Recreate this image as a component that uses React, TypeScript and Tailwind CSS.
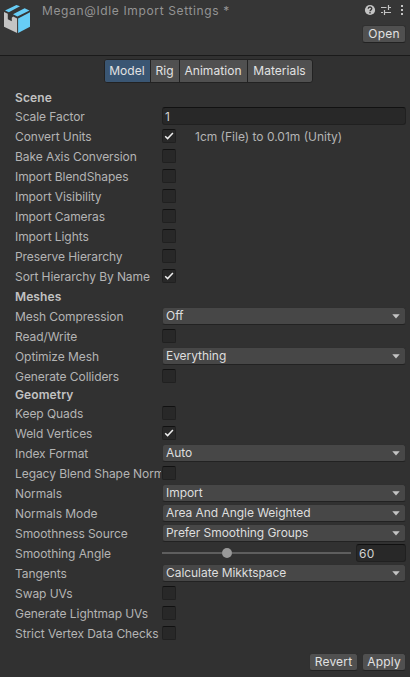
import type { ReactNode } from "react";

function Label({ children }: { children: ReactNode }) {
  return (
    <div className="mr-px w-[146px] shrink-0 overflow-hidden whitespace-nowrap pt-[2px] leading-[18px] tracking-[-0.07px] text-[#b4b4b4]">
      {children}
    </div>
  );
}

function Row({ label, children }: { label: string; children: ReactNode }) {
  return (
    <div className="flex h-5 items-center">
      <Label>{label}</Label>
      {children}
    </div>
  );
}

function Check({ label, on, note }: { label: string; on?: boolean; note?: string }) {
  return (
    <Row label={label}>
      <div className="h-[14px] w-[14px] shrink-0 rounded-[2px] border border-[#202020] border-t-[#111111] bg-[#282828]">
        {on && (
          <svg width="12" height="12" viewBox="0 0 12 12" fill="none" className="block">
            <path d="M2.2 6.3 4.6 8.6 9.9 3.1" stroke="#eeeeee" strokeWidth="1.5" />
          </svg>
        )}
      </div>
      {note && <span className="ml-[19px] whitespace-nowrap pt-px leading-[18px] tracking-[0px] text-[#b4b4b4]">{note}</span>}
    </Row>
  );
}

function Dropdown({ label, value }: { label: string; value: string }) {
  return (
    <Row label={label}>
      <div className="flex h-[18px] w-[244px] items-center justify-between rounded-[3px] border border-[#303030] border-b-[#222222] bg-[#474747] pl-[3px] pr-[5px] text-[#dedede]">
        <span className="leading-4 tracking-[-0.05px]">{value}</span>
        <svg width="8" height="5" viewBox="0 0 8 5" className="block">
          <path d="M.3.3h7.4L4 4.6z" fill="#c4c4c4" />
        </svg>
      </div>
    </Row>
  );
}

function Button({ width, children }: { width: string; children: ReactNode }) {
  return (
    <button
      className={`flex h-[18px] items-center justify-center rounded-[3px] border border-[#303030] border-b-[#222222] bg-[#505050] leading-4 text-[#e2e2e2] ${width}`}
    >
      {children}
    </button>
  );
}

function Heading({ className, children }: { className: string; children: ReactNode }) {
  return <h2 className={`font-semibold text-[#c2c2c2] leading-[18px] tracking-[0.1px] ${className}`}>{children}</h2>;
}

export default function App() {
  return (
    <div className="h-[677px] w-[410px] overflow-hidden bg-[#313131] font-['Inter',sans-serif] text-[12px] tracking-[0.2px]">
      <header className="flex h-14 border-b border-[#1a1a1a] bg-[#363636]">
        <svg width="42" height="40" viewBox="0 0 42 40" className="block shrink-0">
          <path d="M4 12 7.8 13.8v5.4l4 2v-3.4l1.3-1.2 4 2V33L4 26.7z" fill="#c4c4c4" />
          <path d="M18.1 18.6 30 12.2v14.5L18.1 33z" fill="#67cdf6" />
          <path d="M5 10.4 16.4 5l3.6 1.3L8.8 12.2zM13 14.3 24.6 8.2l4.9 2.2L17.4 16.6z" fill="#67cdf6" />
        </svg>
        <div className="flex-1 whitespace-nowrap pt-[2px] leading-[18px] tracking-[0.64px] text-[#949494]">
          Megan@Idle Import Settings *
        </div>
        <div className="flex w-[60px] shrink-0 flex-col items-end pr-1">
          <div className="flex h-[25px] items-center pb-[5px]">
            <svg width="46" height="14" viewBox="0 0 46 14" className="block">
              <circle cx="10" cy="7" r="5.1" fill="#c4c4c4" />
              <path d="M8.2 5.8c0-2.4 3.6-2.3 3.6-.2 0 1.3-1.8 1.2-1.8 2.6M10 9v1.4" stroke="#363636" strokeWidth="1.3" fill="none" />
              <path d="M21 4.5h5.5M28.5 4.5H31M28.5 2v5M21 9.5h2M24.5 9.5H31M24.5 7v5" stroke="#c4c4c4" strokeWidth="1.2" />
              <path d="M41 2h2v2h-2zM41 6h2v2h-2zM41 10h2v2h-2z" fill="#c4c4c4" />
            </svg>
          </div>
          <Button width="w-11">Open</Button>
        </div>
      </header>
      <nav className="flex h-8 justify-center pr-px pt-[3px] pl-[7px] tracking-[0.06px]">
        <div className="flex h-6 overflow-hidden rounded-[3px] border border-[#222222] bg-[#505050] leading-[22px] text-[#e2e2e2]">
          <div className="w-[46px] border-r border-[#222222] bg-[#3a5673] text-center">Model</div>
          <div className="w-[29px] border-r border-[#222222] text-center">Rig</div>
          <div className="w-[68px] border-r border-[#222222] text-center">Animation</div>
          <div className="w-[64px] text-center">Materials</div>
        </div>
      </nav>
      <main className="pl-[15px]">
        <Heading className="h-[18px] pt-px">Scene</Heading>
        <Row label="Scale Factor">
          <div className="h-[18px] w-[244px] rounded-[3px] border border-[#202020] border-t-[#111111] bg-[#282828] pl-[2px] leading-[17px] text-[#d2d2d2]">
            1
          </div>
        </Row>
        <Check label="Convert Units" on note="1cm (File) to 0.01m (Unity)" />
        <Check label="Bake Axis Conversion" />
        <Check label="Import BlendShapes" />
        <Check label="Import Visibility" />
        <Check label="Import Cameras" />
        <Check label="Import Lights" />
        <Check label="Preserve Hierarchy" />
        <Check label="Sort Hierarchy By Name" on />
        <Heading className="h-5 pt-[2px]">Meshes</Heading>
        <Dropdown label="Mesh Compression" value="Off" />
        <Check label="Read/Write" />
        <Dropdown label="Optimize Mesh" value="Everything" />
        <Check label="Generate Colliders" />
        <Heading className="h-[17px]">Geometry</Heading>
        <Check label="Keep Quads" />
        <Check label="Weld Vertices" on />
        <Dropdown label="Index Format" value="Auto" />
        <Check label="Legacy Blend Shape Normals" />
        <Dropdown label="Normals" value="Import" />
        <Dropdown label="Normals Mode" value="Area And Angle Weighted" />
        <Dropdown label="Smoothness Source" value="Prefer Smoothing Groups" />
        <Row label="Smoothing Angle">
          <div className="flex w-[189px] items-center">
            <div className="h-[2px] w-[60px] bg-[#5e5e5e]" />
            <div className="h-[10px] w-[10px] rounded-full bg-[#999999]" />
            <div className="h-[2px] flex-1 bg-[#5e5e5e]" />
          </div>
          <div className="ml-[5px] h-[18px] w-[50px] rounded-[3px] border border-[#202020] border-t-[#111111] bg-[#282828] pl-[2px] leading-[17px] text-[#d2d2d2]">
            60
          </div>
        </Row>
        <Dropdown label="Tangents" value="Calculate Mikktspace" />
        <Check label="Swap UVs" />
        <Check label="Generate Lightmap UVs" />
        <Check label="Strict Vertex Data Checks" />
      </main>
      <footer className="flex justify-end gap-1 pr-1 pt-[10px]">
        <Button width="w-[49px]">Revert</Button>
        <Button width="w-11">Apply</Button>
      </footer>
    </div>
  );
}
